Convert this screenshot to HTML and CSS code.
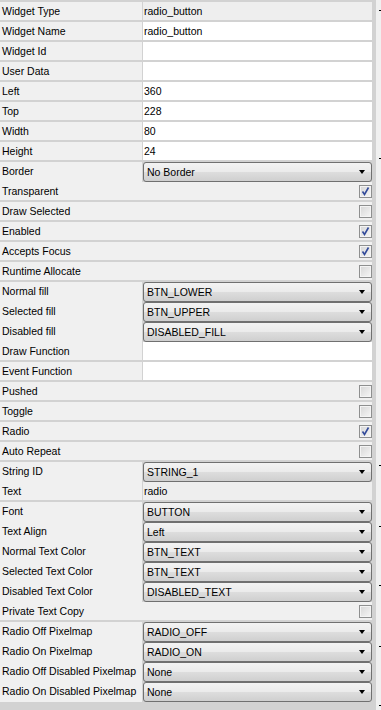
FILE: index.html
```html
<!DOCTYPE html>
<html lang="en">
<head>
    <meta charset="UTF-8">
    <meta name="viewport" content="width=device-width, initial-scale=1.0">
    <title>Widget Properties</title>
    <link rel="stylesheet" href="styles.css">
</head>
<body>
    <div class="panel">
        <div class="props">
            <div class="row"><div class="label">Widget Type</div><div class="value readonly">radio_button</div></div>
            <div class="row"><div class="label">Widget Name</div><div class="value">radio_button</div></div>
            <div class="row"><div class="label">Widget Id</div><div class="value"></div></div>
            <div class="row"><div class="label">User Data</div><div class="value"></div></div>
            <div class="row"><div class="label">Left</div><div class="value">360</div></div>
            <div class="row"><div class="label">Top</div><div class="value">228</div></div>
            <div class="row"><div class="label">Width</div><div class="value">80</div></div>
            <div class="row"><div class="label">Height</div><div class="value">24</div></div>
            <div class="row"><div class="label">Border</div><div class="combo">No Border</div></div>
            <div class="row check-row"><span>Transparent</span><span class="check checked"></span></div>
            <div class="row check-row"><span>Draw Selected</span><span class="check"></span></div>
            <div class="row check-row"><span>Enabled</span><span class="check checked"></span></div>
            <div class="row check-row"><span>Accepts Focus</span><span class="check checked"></span></div>
            <div class="row check-row"><span>Runtime Allocate</span><span class="check"></span></div>
            <div class="row"><div class="label">Normal fill</div><div class="combo">BTN_LOWER</div></div>
            <div class="row"><div class="label">Selected fill</div><div class="combo">BTN_UPPER</div></div>
            <div class="row"><div class="label">Disabled fill</div><div class="combo">DISABLED_FILL</div></div>
            <div class="row"><div class="label">Draw Function</div><div class="value"></div></div>
            <div class="row"><div class="label">Event Function</div><div class="value"></div></div>
            <div class="row check-row"><span>Pushed</span><span class="check"></span></div>
            <div class="row check-row"><span>Toggle</span><span class="check"></span></div>
            <div class="row check-row"><span>Radio</span><span class="check checked"></span></div>
            <div class="row check-row"><span>Auto Repeat</span><span class="check"></span></div>
            <div class="row"><div class="label">String ID</div><div class="combo">STRING_1</div></div>
            <div class="row"><div class="label">Text</div><div class="value readonly">radio</div></div>
            <div class="row"><div class="label">Font</div><div class="combo">BUTTON</div></div>
            <div class="row"><div class="label">Text Align</div><div class="combo">Left</div></div>
            <div class="row"><div class="label">Normal Text Color</div><div class="combo">BTN_TEXT</div></div>
            <div class="row"><div class="label">Selected Text Color</div><div class="combo">BTN_TEXT</div></div>
            <div class="row"><div class="label">Disabled Text Color</div><div class="combo">DISABLED_TEXT</div></div>
            <div class="row check-row"><span>Private Text Copy</span><span class="check"></span></div>
            <div class="row"><div class="label">Radio Off Pixelmap</div><div class="combo">RADIO_OFF</div></div>
            <div class="row"><div class="label">Radio On Pixelmap</div><div class="combo">RADIO_ON</div></div>
            <div class="row"><div class="label">Radio Off Disabled Pixelmap</div><div class="combo">None</div></div>
            <div class="row"><div class="label">Radio On Disabled Pixelmap</div><div class="combo">None</div></div>
        </div>
        <div class="edge">
            <span class="tick t1"></span>
            <span class="tick t2"></span>
            <span class="tick t3"></span>
            <span class="tick t4"></span>
            <span class="tick t5"></span>
            <span class="tick t6"></span>
            <span class="tick t7"></span>
        </div>
    </div>
</body>
</html>
```

FILE: styles.css
```css
body {
    margin: 0;
    background-color: #e4e4e4;
    font-family: 'Liberation Sans', Arial, sans-serif;
    font-size: 10.5px;
    color: #000;
}
.panel {
    display: flex;
    height: 710px;
    overflow: hidden;
}
.props {
    width: 372px;
    padding: 2px 3px 8px 0;
    background-color: #d2d2d2;
    display: flex;
    flex-direction: column;
    gap: 2px;
}
.row {
    display: grid;
    grid-template-columns: 142px 1fr;
    column-gap: 1px;
    height: 18px;
    line-height: 18px;
    flex-shrink: 0;
}
.label {
    background-color: #f0f0f0;
    padding-left: 2px;
    white-space: nowrap;
    overflow: hidden;
}
.value {
    background-color: #fff;
    padding-left: 1px;
}
.value.readonly {
    background-color: #eeeeee;
}
.combo {
    position: relative;
    z-index: 1;
    height: 20px;
    line-height: 19px;
    box-sizing: border-box;
    border: 1px solid #707070;
    border-radius: 3px;
    padding-left: 3px;
    background: linear-gradient(#f3f3f3 0%, #ebebeb 48%, #dddddd 52%, #cfcfcf 100%);
}
.combo:after {
    content: "";
    position: absolute;
    right: 6px;
    top: 7px;
    border-left: 3.5px solid transparent;
    border-right: 3.5px solid transparent;
    border-top: 4px solid #000;
}
.check-row {
    display: flex;
    justify-content: space-between;
    background-color: #f0f0f0;
    padding-left: 2px;
}
.check {
    width: 13px;
    height: 13px;
    box-sizing: border-box;
    margin-top: 3px;
    border: 1px solid #8e8f8f;
    box-shadow: inset 0 0 0 1px #f4f4f4;
    background: linear-gradient(135deg, #d6d6d6, #f6f6f6);
}
.check.checked {
    background:
        url("data:image/svg+xml,%3Csvg xmlns='http://www.w3.org/2000/svg' width='11' height='11'%3E%3Cpath d='M2.5 5.5 L4.5 8.5 L8.5 1.5' fill='none' stroke='%23324a9a' stroke-width='1.6'/%3E%3C/svg%3E") center no-repeat,
        linear-gradient(135deg, #d6d6d6, #f6f6f6);
}
.edge {
    flex: 1;
    background-color: #f0f0f0;
    border-left: 1px solid #d2d2d2;
    display: flex;
    flex-direction: column;
    align-items: flex-end;
}
.tick {
    width: 2px;
    height: 1px;
    background-color: #000;
}
.t1 { margin-top: 10px; }
.t2 { margin-top: 147px; }
.t3 { margin-top: 306px; }
.t4 { margin-top: 60px; }
.t5 { margin-top: 58px; }
.t6 { margin-top: 60px; }
.t7 { margin-top: 58px; }
```
